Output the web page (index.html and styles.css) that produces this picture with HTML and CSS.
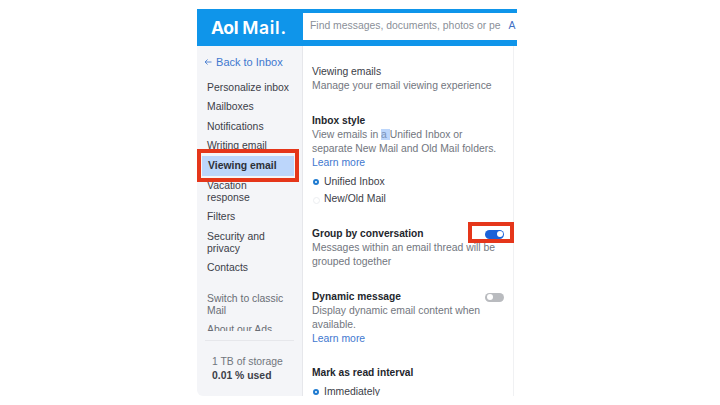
FILE: index.html
```html
<!DOCTYPE html>
<html lang="en">
<head>
  <meta charset="UTF-8">
  <title>Aol Mail - Viewing emails</title>
  <link rel="stylesheet" href="styles.css">
</head>
<body>
  <div class="phone">
    <div class="topbar">
      <div class="logo"><span class="logo-aol">Aol</span><span class="logo-mail">Mail.</span></div>
      <div class="search">
        <span class="search-text">Find messages, documents, photos or pe</span>
        <span class="search-link">A</span>
      </div>
    </div>

    <div class="content">
      <div class="sidebar">
        <div class="side-nav">
          <a class="back">
            <svg class="back-icon" width="8" height="8" viewBox="0 0 8 8"><path d="M7.5 4H1M3.6 1.5L1 4l2.6 2.5" fill="none" stroke="#4a7fd0" stroke-width="0.9"/></svg>
            Back to Inbox
          </a>
          <a class="side-item">Personalize inbox</a>
          <a class="side-item">Mailboxes</a>
          <a class="side-item">Notifications</a>
          <a class="side-item">Writing email</a>
          <a class="side-item active">Viewing email</a>
          <a class="side-item">Vacation response</a>
          <a class="side-item">Filters</a>
          <a class="side-item">Security and privacy</a>
          <a class="side-item">Contacts</a>
          <a class="side-item muted switch">Switch to classic Mail</a>
          <a class="side-item muted">About our Ads</a>
        </div>
        <div class="storage">
          <div class="storage-size">1 TB of storage</div>
          <div class="storage-used">0.01 % used</div>
        </div>
      </div>

      <div class="main">
        <div class="section intro">
          <div class="page-title">Viewing emails</div>
          <div class="desc">Manage your email viewing experience</div>
        </div>

        <div class="section">
          <div class="label">Inbox style</div>
          <div class="desc">View emails in <span class="selected">a </span>Unified Inbox or separate New Mail and Old Mail folders.</div>
          <a class="learn">Learn more</a>
          <div class="radio on">Unified Inbox</div>
          <div class="radio second">New/Old Mail</div>
        </div>

        <div class="section">
          <div class="label-row">
            <div class="label">Group by conversation</div>
            <span class="toggle on"></span>
          </div>
          <div class="desc">Messages within an email thread will be grouped together</div>
        </div>

        <div class="section dynamic">
          <div class="label-row">
            <div class="label">Dynamic message</div>
            <span class="toggle"></span>
          </div>
          <div class="desc">Display dynamic email content when available.</div>
          <a class="learn">Learn more</a>
        </div>

        <div class="section">
          <div class="label">Mark as read interval</div>
          <div class="radio on">Immediately</div>
        </div>
      </div>
    </div>

    <!-- red annotation boxes -->
    <div class="callout callout-nav"></div>
    <div class="callout callout-toggle"></div>
  </div>
</body>
</html>
```

FILE: styles.css
```css
html, body {
  margin: 0;
  padding: 0;
  background: #fff;
  overflow: hidden;
}

body {
  height: 405px;
  font-family: "Liberation Sans", Arial, sans-serif;
  font-size: 10.4px;
  color: #3c4048;
}

.phone {
  position: relative;
  width: 320px;
  height: 387px;
  margin: 9px 0 0 197px;
  overflow: hidden;
  display: flex;
  flex-direction: column;
}

.topbar {
  display: flex;
  flex: none;
  height: 37px;
  background: #0f95ea;
  box-sizing: border-box;
  padding: 3.5px 0;
}

.logo {
  width: 106px;
  flex: none;
  box-sizing: border-box;
  padding-left: 14px;
  color: #fff;
  font-family: Inter, "Liberation Sans", sans-serif;
  font-size: 17.5px;
  line-height: 29px;
  white-space: nowrap;
}

.logo-aol {
  font-weight: 700;
  letter-spacing: -0.3px;
  margin-right: 4px;
}

.logo-mail {
  font-weight: 600;
  letter-spacing: 0.7px;
}

.search {
  flex: 1;
  display: flex;
  gap: 8px;
  background: #fff;
  padding-left: 7px;
  height: 27px;
  line-height: 26px;
  white-space: nowrap;
  overflow: hidden;
  color: #8a8f98;
}

.search-link {
  color: #3f6fc4;
}

.content {
  flex: 1;
  display: flex;
  min-height: 0;
}

.sidebar {
  width: 106px;
  flex: none;
  display: flex;
  flex-direction: column;
  background: #f4f5f8;
  border-right: 1px solid #e6e7eb;
  box-sizing: border-box;
  border-radius: 0 0 0 6px;
}

.side-nav {
  height: 285px;
  padding: 9px 0 0 10px;
  box-sizing: border-box;
  overflow: hidden;
  flex: none;
}

.side-nav a {
  display: block;
}

.back {
  color: #3f78cf;
  font-size: 11px;
  line-height: 14px;
  margin: 0 0 9px -3px;
}

.back-icon {
  margin-right: 1px;
}

.side-item {
  line-height: 12px;
  padding: 3.75px 12px 3.75px 0;
  color: #3c4048;
}

.side-item.muted {
  color: #696d75;
}

.side-item.switch {
  margin-top: 11px;
}

.side-item.active {
  font-weight: bold;
  color: #2c3038;
  background: #bcd6fb;
  margin: 0 8px 0 -5px;
  padding: 4px 0 4px 6px;
}

.storage {
  margin: 9px 8px 0;
  border-top: 1px solid #e6e7eb;
  padding: 14px 0 0 7px;
  line-height: 14px;
}

.storage-size {
  color: #71757d;
}

.storage-used {
  font-weight: bold;
  color: #3c4048;
}

.main {
  flex: 1;
  box-sizing: border-box;
  padding: 0 9px;
  border-right: 1px solid #f0f1f3;
  margin-right: 3px;
  overflow: hidden;
}

.section {
  margin-bottom: 21px;
  line-height: 14px;
}

.section.dynamic {
  margin-bottom: 20px;
}

.intro {
  padding-top: 19px;
}

.page-title {
  color: #3c4048;
}

.desc {
  color: #72767e;
}

.label {
  font-weight: bold;
  font-size: 10.2px;
  color: #23262c;
}

.label-row {
  display: flex;
  justify-content: space-between;
  align-items: center;
}

.learn {
  display: block;
  color: #3f78cf;
}

.selected {
  background: #bcd6fb;
  color: #7b93b8;
}

.radio {
  position: relative;
  padding-left: 12px;
  margin-top: 5px;
  color: #3c4048;
}

.radio.second {
  margin-top: 3px;
}

.radio::before {
  content: "";
  position: absolute;
  left: 1px;
  top: 5px;
  width: 5px;
  height: 5px;
  border-radius: 50%;
  border: 0.5px solid #eceef1;
}

.radio.on::before {
  width: 2px;
  height: 2px;
  border: 2px solid #1f7bd0;
  top: 4px;
}

.toggle {
  position: relative;
  display: block;
  width: 19px;
  height: 9px;
  border-radius: 5px;
  background: #b9bbbf;
  flex: none;
}

.toggle::after {
  content: "";
  position: absolute;
  left: 1.5px;
  top: 1.5px;
  width: 6px;
  height: 6px;
  border-radius: 50%;
  background: #fff;
}

.toggle.on {
  background: #1b62d8;
}

.toggle.on::after {
  left: auto;
  right: 1.5px;
}

.callout {
  position: absolute;
  box-sizing: border-box;
  border: 4px solid #e5361a;
  pointer-events: none;
}

.callout-nav {
  left: 0;
  top: 140px;
  width: 102px;
  height: 33px;
}

.callout-toggle {
  left: 271px;
  top: 213px;
  width: 46px;
  height: 21px;
}
```
